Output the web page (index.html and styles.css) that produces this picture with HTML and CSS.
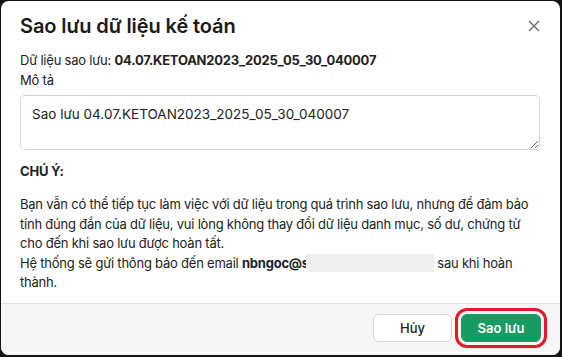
FILE: index.html
```html
<!DOCTYPE html>
<html>
<head>
<meta charset="utf-8">
<title>Sao lưu dữ liệu kế toán</title>
<link rel="stylesheet" href="styles.css">
</head>
<body>
    <div class="dialog">
        <div class="hd">
            <h2>Sao lưu dữ liệu kế toán</h2>
            <button class="close" title="Đóng">
                <svg width="12" height="12" viewBox="0 0 12 12"><path d="M1 1 L11 11 M11 1 L1 11" stroke="#6b6b6b" stroke-width="1.4" fill="none"/></svg>
            </button>
        </div>
        <div class="bd">
            <p class="line">Dữ liệu sao lưu: <b>04.07.KETOAN2023_2025_05_30_040007</b></p>
            <p class="line">Mô tả</p>
            <textarea class="desc">Sao lưu 04.07.KETOAN2023_2025_05_30_040007</textarea>
            <h3>CHÚ Ý:</h3>
            <p class="note">Bạn vẫn có thể tiếp tục làm việc với dữ liệu trong quá trình sao lưu, nhưng để đảm bảo tính đúng đắn của dữ liệu, vui lòng không thay đổi dữ liệu danh mục, số dư, chứng từ cho đến khi sao lưu được hoàn tất.<br>Hệ thống sẽ gửi thông báo đến email <b>nbngoc@s</b><span class="mask"></span> sau khi hoàn thành.</p>
        </div>
        <div class="ft">
            <button class="btn">Hủy</button>
            <button class="btn primary">Sao lưu</button>
        </div>
    </div>
</body>
</html>
```

FILE: styles.css
```css
body,div,h2,h3,p { margin:0; padding:0; }
body { background:#141414; font:13px Inter,"Noto Sans",sans-serif; color:#222; }

.dialog { margin:1px 2px 2px 1px; height:354px; background:#fff; border-radius:8px; display:flex; flex-direction:column; overflow:hidden; }

.hd { display:flex; align-items:center; justify-content:space-between; padding:11px 20px 0 19px; }
.hd h2 { font-size:20px; font-weight:600; line-height:28px; color:#1a1a1a; letter-spacing:-0.1px; }
.hd .close { background:none; border:0; padding:0; width:12px; height:12px; display:flex; cursor:pointer; }

.bd { padding:10px 20px 0 19px; letter-spacing:-0.22px; }
.bd .line { line-height:20px; }
.bd .desc { display:block; box-sizing:border-box; width:100%; height:55px; margin-top:5px; padding:8px 11px; border:1px solid #d4d4d4; border-radius:5px; font:13.5px Inter,"Noto Sans",sans-serif; line-height:20px; color:#222; resize:vertical; }
.bd h3 { font-size:13px; font-weight:700; line-height:20px; margin-top:11px; }
.bd .note { line-height:19.5px; margin-top:14px; }
.bd .mask { display:inline-block; width:128px; height:18px; background:#efefef; vertical-align:-4px; margin-left:-3px; }

.ft { margin-top:auto; height:52px; box-sizing:border-box; border-top:1px solid #e2e2e2; background:#f6f6f6; display:flex; align-items:center; justify-content:flex-end; gap:9px; padding:0 19px 4px; }
.btn { width:79px; height:28px; border-radius:6px; border:1px solid #d9d9d9; background:#fff; font:500 13px Inter,"Noto Sans",sans-serif; color:#222; cursor:pointer; }
.btn.primary { width:80px; background:#169c63; border-color:#169c63; color:#fff; font-weight:600; outline:3px solid #e3192c; outline-offset:3px; }
```
